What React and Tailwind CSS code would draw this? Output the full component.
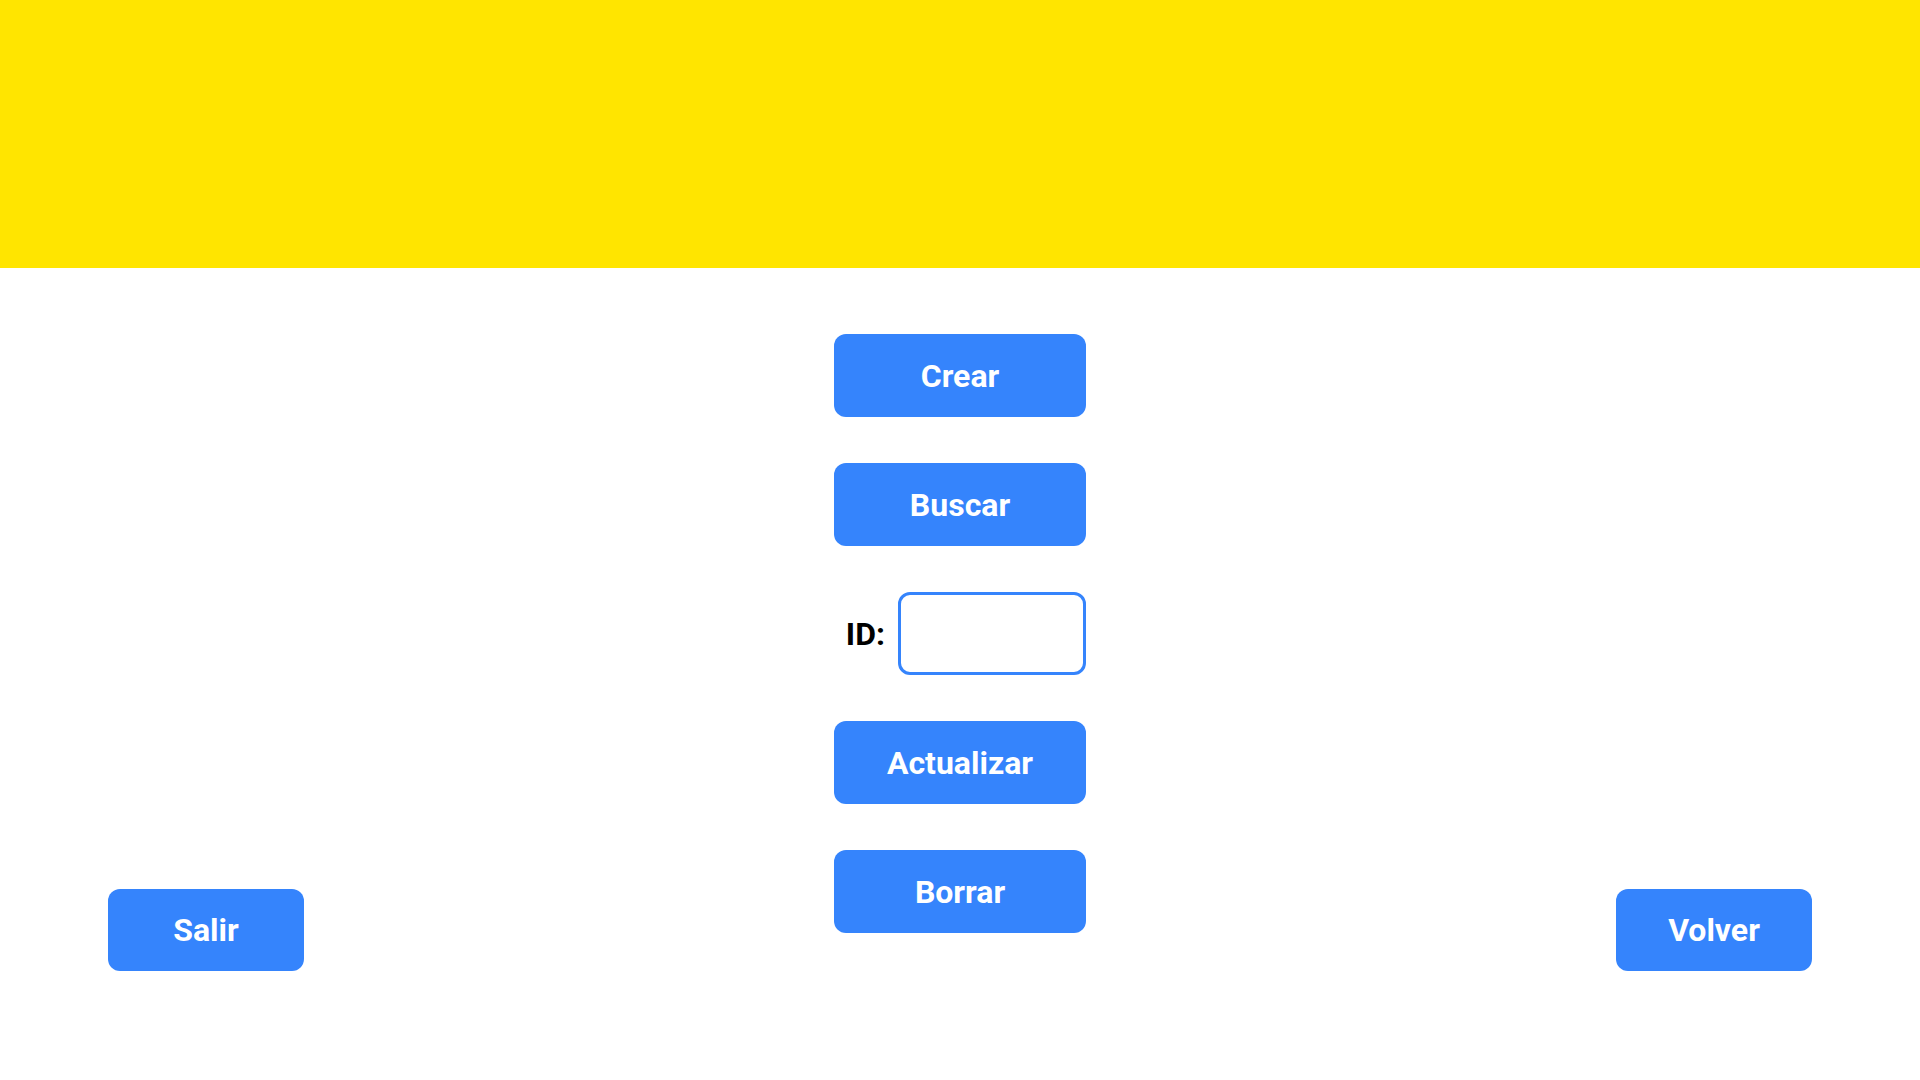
import React, { useState } from "react";

const btn =
  "w-full h-[83px] rounded-[12px] bg-[#3584fc] text-white text-[32px] font-bold flex items-center justify-center";

export default function App() {
  const [id, setId] = useState("");

  return (
    <div className="min-h-screen bg-white font-['Roboto',_'Liberation_Sans',_sans-serif]">
      <div className="h-[268px] bg-[#ffe500]" />

      <div className="flex justify-between items-start px-[108px]">
        <button className="mt-[621px] w-[196px] h-[82px] rounded-[12px] bg-[#3584fc] text-white text-[32px] font-bold">
          Salir
        </button>

        <div className="mt-[66px] w-[252px] flex flex-col gap-[46px]">
          <button className={btn}>Crear</button>
          <button className={btn}>Buscar</button>
          <div className="flex items-center justify-end gap-[13px]">
            <label className="text-[32px] font-bold text-black">ID:</label>
            <input
              value={id}
              onChange={(e) => setId(e.target.value)}
              className="w-[188px] h-[83px] rounded-[12px] border-[3px] border-[#3584fc] outline-none px-3 text-[28px]"
            />
          </div>
          <button className={btn}>Actualizar</button>
          <button className={btn}>Borrar</button>
        </div>

        <button className="mt-[621px] w-[196px] h-[82px] rounded-[12px] bg-[#3584fc] text-white text-[32px] font-bold">
          Volver
        </button>
      </div>
    </div>
  );
}
